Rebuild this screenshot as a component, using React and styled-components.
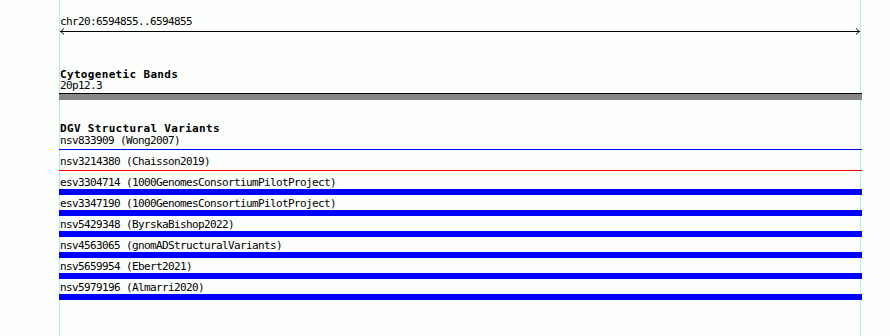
import React from 'react'
import styled, { createGlobalStyle } from 'styled-components'

const GlobalStyle = createGlobalStyle`
  html, body {
    margin: 0;
    padding: 0;
    background: #fcfefc;
  }
  body {
    font-family: "DejaVu Sans Mono", "Liberation Mono", monospace;
    color: #000;
  }
`

const Frame = styled.div`
  margin-left: 59px;
  width: 800px;
  min-height: 336px;
  border-left: 1px solid #afeeee;
  border-right: 1px solid #afeeee;
`

const Ruler = styled.div`
  padding-top: 16px;
`

const Label = styled.div`
  font-size: 11px;
  line-height: 11px;
  height: 11px;
  letter-spacing: -0.62px;
  white-space: pre;
`

const Title = styled(Label)`
  font-weight: bold;
  letter-spacing: 0.33px;
  margin-top: ${props => props.$gap || 0}px;
`

const ArrowSvg = styled.svg`
  display: block;
  margin-top: 1px;
  width: 800px;
  height: 7px;
`

const Band = styled.div`
  margin: 2px -2px 0 -1px;
  height: 6px;
  background: #888588;
  border-top: 1px solid #000;
`

const Row = styled.div`
  height: 21px;
`

const Feature = styled.div`
  margin: ${props => props.$thick ? 1 : 3}px -2px 0 -1px;
  height: ${props => props.$thick ? 6 : 1}px;
  background: ${props => props.$color};
`

const variants = [
  { id: 'nsv833909', study: 'Wong2007', color: '#0000ff' },
  { id: 'nsv3214380', study: 'Chaisson2019', color: '#ff0000' },
  { id: 'esv3304714', study: '1000GenomesConsortiumPilotProject', thick: true },
  { id: 'esv3347190', study: '1000GenomesConsortiumPilotProject', thick: true },
  { id: 'nsv5429348', study: 'ByrskaBishop2022', thick: true },
  { id: 'nsv4563065', study: 'gnomADStructuralVariants', thick: true },
  { id: 'nsv5659954', study: 'Ebert2021', thick: true },
  { id: 'nsv5979196', study: 'Almarri2020', thick: true }
]

const Arrow = () => (
  <ArrowSvg viewBox='0 0 800 7'>
    <g fill='none' stroke='#000' strokeWidth='1'>
      <line x1='0' y1='3.5' x2='800' y2='3.5' shapeRendering='crispEdges' />
      <polyline points='4,0.5 0.8,3.5 4,6.5' />
      <polyline points='796,0.5 799.2,3.5 796,6.5' />
    </g>
  </ArrowSvg>
)

export default function App () {
  return (
    <>
      <GlobalStyle />
      <Frame>
        <Ruler>
          <Label>chr20:6594855..6594855</Label>
          <Arrow />
        </Ruler>

        <Title $gap={34}>Cytogenetic Bands</Title>
        <Label>20p12.3</Label>
        <Band />

        <Title $gap={23}>DGV Structural Variants</Title>
        <div style={{ marginTop: 1 }}>
          {variants.map(v => (
            <Row key={v.id}>
              <Label>{`${v.id} (${v.study})`}</Label>
              <Feature $thick={v.thick} $color={v.color || '#0000ff'} />
            </Row>
          ))}
        </div>
      </Frame>
    </>
  )
}
